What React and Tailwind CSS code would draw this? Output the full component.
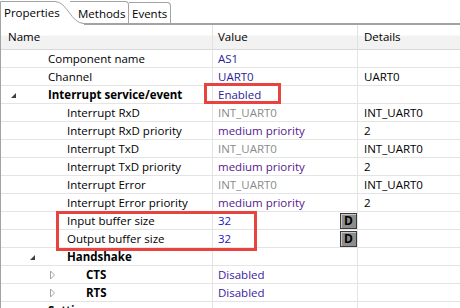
import React from 'react';

const rows = [
  { name: 'Component name', level: 0, value: 'AS1', tone: 'blue' },
  { name: 'Channel', level: 0, value: 'UART0', tone: 'blue', details: 'UART0' },
  { name: 'Interrupt service/event', level: 0, bold: true, toggle: 'open', value: 'Enabled', tone: 'blue' },
  { name: 'Interrupt RxD', level: 1, value: 'INT_UART0', tone: 'grey', details: 'INT_UART0' },
  { name: 'Interrupt RxD priority', level: 1, value: 'medium priority', tone: 'purple', details: '2' },
  { name: 'Interrupt TxD', level: 1, value: 'INT_UART0', tone: 'grey', details: 'INT_UART0' },
  { name: 'Interrupt TxD priority', level: 1, value: 'medium priority', tone: 'purple', details: '2' },
  { name: 'Interrupt Error', level: 1, value: 'INT_UART0', tone: 'grey', details: 'INT_UART0' },
  { name: 'Interrupt Error priority', level: 1, value: 'medium priority', tone: 'purple', details: '2' },
  { name: 'Input buffer size', level: 1, value: '32', tone: 'num', button: true },
  { name: 'Output buffer size', level: 1, value: '32', tone: 'num', button: true },
  { name: 'Handshake', level: 1, bold: true, toggle: 'open' },
  { name: 'CTS', level: 2, bold: true, toggle: 'closed', value: 'Disabled', tone: 'dis' },
  { name: 'RTS', level: 2, bold: true, toggle: 'closed', value: 'Disabled', tone: 'dis' },
  { name: 'Settings', level: 0, bold: true, toggle: 'open' },
];

const indent = ['w-[9px]', 'w-[28px]', 'w-[47px]'];

const tones = {
  blue: 'text-[#2b1d98]',
  purple: 'text-[#55208e]',
  grey: 'text-[#8a8a8a]',
  num: 'text-[#1a18c0]',
  dis: 'text-[#3a1aa4]',
};

const Toggle = ({ kind }) => {
  if (kind === 'open') {
    return (
      <svg width="8" height="8" viewBox="0 0 8 8" className="mt-[3px]">
        <polygon points="6,1 6,6 1,6" fill="#3f3f3f" />
      </svg>
    );
  }
  if (kind === 'closed') {
    return (
      <svg width="8" height="10" viewBox="0 0 8 10">
        <polygon points="2.5,1 6.5,5 2.5,9" fill="#fff" stroke="#a6a6a6" strokeWidth="1" />
      </svg>
    );
  }
  return null;
};

const Row = ({ row }) => (
  <div className="flex h-[18px] border-b border-[#e4e4e4]">
    <div className="flex w-[212px] shrink-0 items-center border-r border-[#e4e4e4]">
      <span className={`${indent[row.level]} shrink-0`} />
      <span className="flex w-[8px] shrink-0 items-center">
        <Toggle kind={row.toggle} />
      </span>
      <span className={`ml-[30px] whitespace-nowrap text-black ${row.bold ? 'font-bold' : ''}`}>{row.name}</span>
    </div>
    <div className="flex w-[145px] shrink-0 items-center border-r border-[#e4e4e4] pl-[5px]">
      <span className={`whitespace-nowrap ${tones[row.tone] || ''}`}>{row.value}</span>
      {row.button && (
        <span className="ml-auto flex h-[16px] w-[17px] items-center justify-center border border-[#3a3a3a] bg-[#8d8d8d] text-[12px] font-bold leading-none text-black shadow-[inset_1px_1px_0_#c8c8c8]">
          D
        </span>
      )}
    </div>
    <div className="flex flex-1 items-center pl-[6px] whitespace-nowrap text-black">{row.details}</div>
  </div>
);

export default function App() {
  return (
    <div className="relative h-[308px] w-[460px] overflow-hidden bg-white text-[11.5px] leading-none font-['Open_Sans','Noto_Sans',sans-serif]">
      {/* tab strip */}
      <div className="flex h-[25px]">
        <div className="relative z-10 h-[25px] w-[84px] shrink-0">
          <svg width="84" height="25" viewBox="0 0 84 25" className="absolute inset-0">
            <path d="M0 25 V1.5 H55 C67 1.5 71 23.5 84 23.5 V25 Z" fill="#fff" />
            <path d="M0.5 25 V1.5 H55 C67 1.5 71 23.5 84 23.5" fill="none" stroke="#a3a3a3" strokeWidth="1" />
          </svg>
          <span className="relative block pl-[4px] pt-[7px] text-black">Properties</span>
        </div>
        <div className="-ml-[14px] mt-[1px] h-[24px] w-[59px] shrink-0 rounded-tr-[4px] border-t border-r border-b-2 border-[#a3a3a3] pl-[8px] pt-[6px] text-black">
          Methods
        </div>
        <div className="mt-[2px] h-[23px] w-[42px] shrink-0 rounded-tr-[4px] border-t border-r border-b-2 border-[#a3a3a3] pl-[3px] pt-[5px] text-black">
          Events
        </div>
        <div className="flex-1 border-b-2 border-[#a3a3a3]" />
      </div>

      {/* table */}
      <div className="border-l border-[#a3a3a3]">
        <div className="flex h-[25px] border-b border-[#d8d8d8] bg-[linear-gradient(to_bottom,#ffffff_0%,#ffffff_42%,#f2f2f2_46%,#f2f2f2_100%)]">
          <div className="flex w-[212px] shrink-0 items-center border-r border-[#e2e2e2] pl-[7px] text-black">Name</div>
          <div className="flex w-[145px] shrink-0 items-center border-r border-[#e2e2e2] pl-[5px] text-black">Value</div>
          <div className="flex flex-1 items-center pl-[6px] text-black">Details</div>
        </div>
        {rows.map((row) => (
          <Row key={row.name} row={row} />
        ))}
      </div>

      {/* annotation boxes */}
      <div className="absolute left-[204px] top-[83px] h-[21px] w-[77px] border-[3px] border-[#e8443f]" />
      <div className="absolute left-[56px] top-[211px] h-[40px] w-[201px] border-[3px] border-[#e8443f]" />
    </div>
  );
}
